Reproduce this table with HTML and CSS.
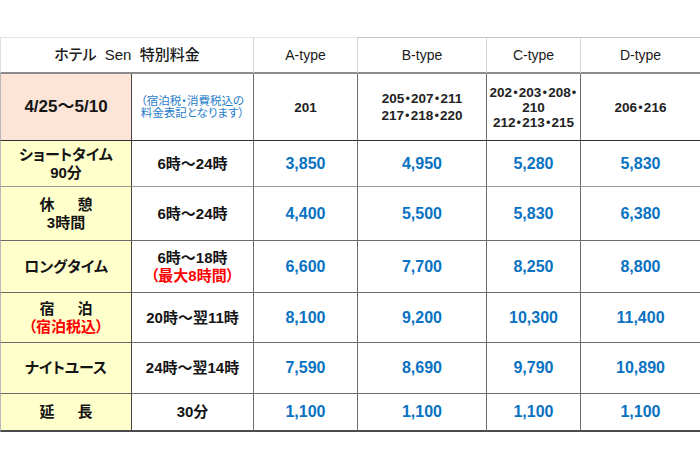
FILE: index.html
```html
<!DOCTYPE html>
<html lang="ja">
<head>
<meta charset="utf-8">
<title>ホテル Sen 特別料金</title>
<link rel="stylesheet" href="styles.css">
</head>
<body>
<div class="sheet">
<table class="rates">
  <colgroup>
    <col class="c1"><col class="c2"><col class="c3"><col class="c4"><col class="c5"><col class="c6">
  </colgroup>
  <thead>
    <tr class="r-head">
      <th colspan="2" class="title">ホテル&nbsp;&nbsp;Sen&nbsp;&nbsp;特別料金</th>
      <th>A-type</th>
      <th class="top-dark">B-type</th>
      <th class="top-dark">C-type</th>
      <th class="top-dark">D-type</th>
    </tr>
  </thead>
  <tbody>
    <tr class="r-rooms">
      <td class="label date">4/25〜5/10</td>
      <td class="note">（宿泊税・消費税込の<br>料金表記となります）</td>
      <td class="room">201</td>
      <td class="room wide">205・207・211<br>217・218・220</td>
      <td class="room">202・203・208・<br>210<br>212・213・215</td>
      <td class="room">206・216</td>
    </tr>
    <tr class="r-short">
      <td class="label">ショートタイム<br>90分</td>
      <td class="time">6時〜24時</td>
      <td class="price">3,850</td>
      <td class="price">4,950</td>
      <td class="price">5,280</td>
      <td class="price">5,830</td>
    </tr>
    <tr class="r-rest">
      <td class="label">休<span class="gap"></span>憩<br>3時間</td>
      <td class="time">6時〜24時</td>
      <td class="price">4,400</td>
      <td class="price">5,500</td>
      <td class="price">5,830</td>
      <td class="price">6,380</td>
    </tr>
    <tr class="r-long">
      <td class="label">ロングタイム</td>
      <td class="time">6時〜18時<br><span class="red">（最大8時間）</span></td>
      <td class="price">6,600</td>
      <td class="price">7,700</td>
      <td class="price">8,250</td>
      <td class="price">8,800</td>
    </tr>
    <tr class="r-stay">
      <td class="label">宿<span class="gap"></span>泊<br><span class="red">（宿泊税込）</span></td>
      <td class="time">20時〜翌11時</td>
      <td class="price">8,100</td>
      <td class="price">9,200</td>
      <td class="price">10,300</td>
      <td class="price">11,400</td>
    </tr>
    <tr class="r-night">
      <td class="label">ナイトユース</td>
      <td class="time">24時〜翌14時</td>
      <td class="price">7,590</td>
      <td class="price">8,690</td>
      <td class="price">9,790</td>
      <td class="price">10,890</td>
    </tr>
    <tr class="r-ext">
      <td class="label">延<span class="gap"></span>長</td>
      <td class="time">30分</td>
      <td class="price">1,100</td>
      <td class="price">1,100</td>
      <td class="price">1,100</td>
      <td class="price">1,100</td>
    </tr>
  </tbody>
</table>
</div>
</body>
</html>
```
FILE: styles.css
```css
* { box-sizing: border-box; }

body {
  margin: 0;
  background: #ffffff;
  color: #141414;
  font-family: "Liberation Sans", "Noto Sans CJK JP", sans-serif;
  font-feature-settings: "palt";
}

.sheet {
  padding-top: 37px;
}

.rates {
  width: 700px;
  table-layout: fixed;
  border-collapse: separate;
  border-spacing: 0;
}

.c1 { width: 132px; }
.c2 { width: 122px; }
.c3 { width: 104px; }
.c4 { width: 129px; }
.c5 { width: 94px; }
.c6 { width: 119px; }

.rates th,
.rates td {
  padding: 0;
  text-align: center;
  vertical-align: middle;
  border-right: 1px solid #6e6e6e;
  border-bottom: 1px solid #6a6a6a;
  line-height: 18px;
}

.rates th:last-child,
.rates td:last-child {
  border-right: none;
}

/* header */
.rates th {
  font-weight: normal;
  font-size: 14px;
  color: #1a1a1a;
  border-top: 1px solid #e4e4e4;
  border-right-color: #d4d4d4;
  border-bottom: 2px solid #8c8c8c;
}

.rates th.top-dark {
  border-top-color: #c4c4c4;
}

.rates th.title {
  font-size: 15px;
  font-weight: 500;
  border-left: 1px solid #e0e0e0;
}

.r-head { height: 37px; }
.r-rooms { height: 67px; }
.r-short { height: 46px; }
.r-rest { height: 54px; }
.r-long { height: 52px; }
.r-stay { height: 50px; }
.r-night { height: 51px; }
.r-ext { height: 38px; }

.r-rooms td { border-bottom-color: #2e2e2e; }
.r-short td { border-bottom-color: #9a9a9a; }
.r-ext td { border-bottom: 2px solid #4a4a4a; }

/* label column */
.rates td.label {
  background: #ffffcc;
  font-weight: bold;
  font-size: 15px;
  border-left: 1px solid #b8b8b8;
  border-right-color: #444444;
}

.rates td.date {
  background: #fce4d6;
  font-size: 17px;
}

.gap {
  display: inline-block;
  width: 23px;
}

.rates td.note {
  color: #1f7cc9;
  font-size: 11.5px;
  line-height: 12px;
}

.rates td.room {
  font-weight: bold;
  font-size: 13.5px;
  line-height: 15px;
  color: #222222;
}

.rates td.room.wide {
  line-height: 17px;
}

.rates td.time {
  font-weight: bold;
  font-size: 15px;
}

.red {
  color: #ff0000;
}

.rates td.price {
  color: #0a72c2;
  font-weight: bold;
  font-size: 16px;
}
```
